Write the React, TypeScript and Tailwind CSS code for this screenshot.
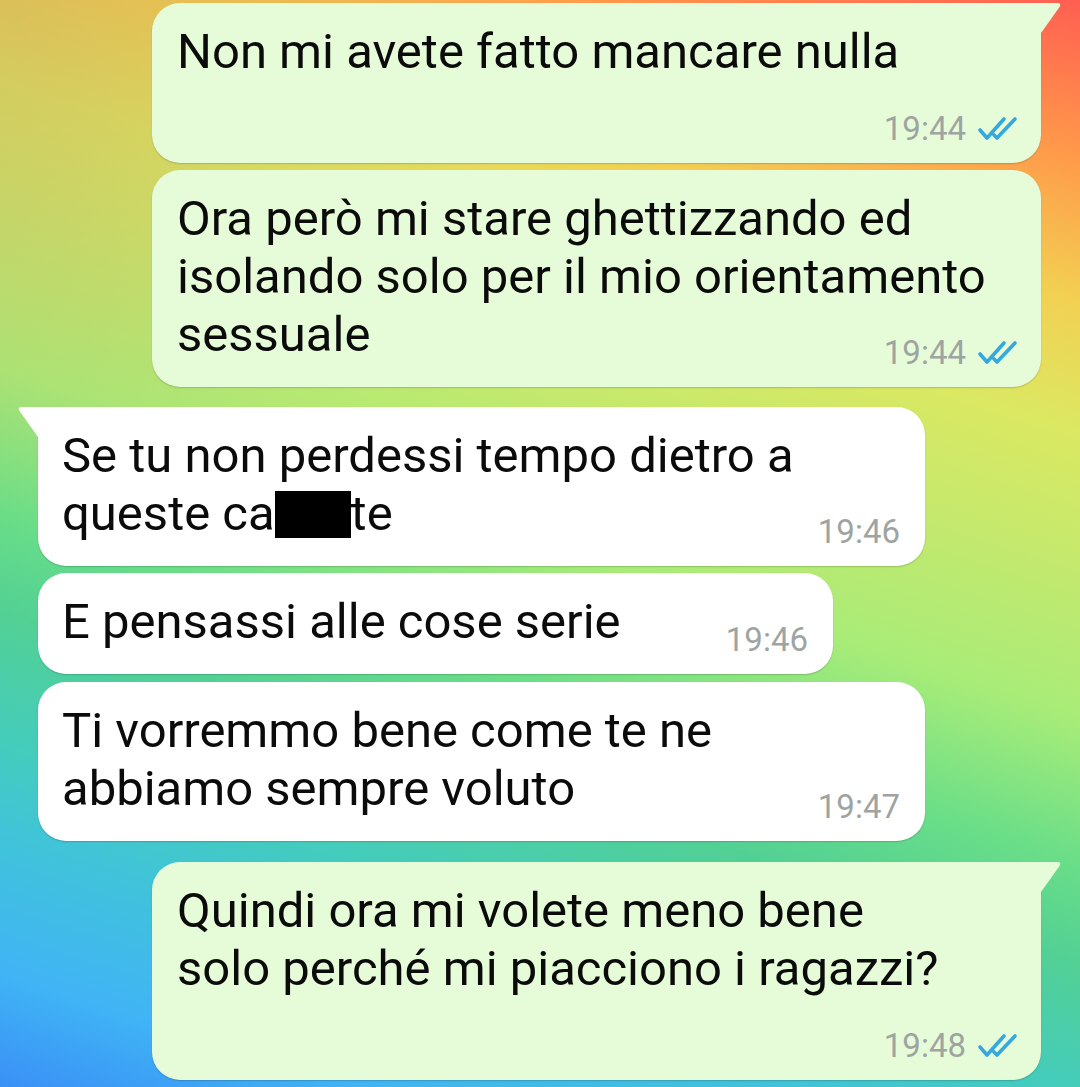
import React from "react";

type Msg = {
  out: boolean;
  lines: React.ReactNode[];
  time: string;
  inline: boolean;
  tail?: boolean;
  width: string;
  gap: string;
};

const messages: Msg[] = [
  {
    out: true,
    lines: ["Non mi avete fatto mancare nulla"],
    time: "19:44",
    inline: false,
    tail: true,
    width: "w-[889px]",
    gap: "mt-[3px]",
  },
  {
    out: true,
    lines: [
      "Ora però mi stare ghettizzando ed",
      "isolando solo per il mio orientamento",
      "sessuale",
    ],
    time: "19:44",
    inline: true,
    width: "w-[889px]",
    gap: "mt-[7px]",
  },
  {
    out: false,
    lines: [
      "Se tu non perdessi tempo dietro a",
      <>
        queste ca
        <span className="inline-block w-[76px] h-[47px] bg-black align-[-8px]" />
        te
      </>,
    ],
    time: "19:46",
    inline: true,
    tail: true,
    width: "w-[887px]",
    gap: "mt-[20px]",
  },
  {
    out: false,
    lines: ["E pensassi alle cose serie"],
    time: "19:46",
    inline: true,
    width: "w-[795px]",
    gap: "mt-[7px]",
  },
  {
    out: false,
    lines: ["Ti vorremmo bene come te ne", "abbiamo sempre voluto"],
    time: "19:47",
    inline: true,
    width: "w-[887px]",
    gap: "mt-[8px]",
  },
  {
    out: true,
    lines: ["Quindi ora mi volete meno bene", "solo perché mi piacciono i ragazzi?"],
    time: "19:48",
    inline: false,
    tail: true,
    width: "w-[889px]",
    gap: "mt-[21px]",
  },
];

const DoubleCheck = () => (
  <svg width="42" height="26" viewBox="0 0 42 26" fill="none" className="shrink-0">
    <path
      d="M3 14 L10 22 L27 3 M17 19 L20 22 L38 3"
      stroke="#34a8df"
      strokeWidth="3.6"
      strokeLinecap="round"
      strokeLinejoin="round"
    />
  </svg>
);

const Bubble = ({ m }: { m: Msg }) => {
  const corners = m.tail
    ? m.out
      ? "rounded-[28px] rounded-tr-none"
      : "rounded-[28px] rounded-tl-none"
    : "rounded-[28px]";
  return (
    <div
      className={`relative ${m.width} ${m.gap} ${m.out ? "ml-[152px] bg-[#e6fcd9] pl-[25px] pr-[22px]" : "ml-[38px] bg-white pl-[24px] pr-[25px]"} ${corners} pt-[20px] pb-[17px] shadow-[0_1px_1.5px_rgba(0,0,0,0.18)]`}
    >
      {m.tail && m.out && (
        <svg
          width="22"
          height="32"
          viewBox="0 0 22 32"
          className="absolute left-full top-0"
        >
          <path d="M0 0 H16 Q21 0 18.5 4 L0 30 Z" fill="#e6fcd9" />
        </svg>
      )}
      {m.tail && !m.out && (
        <svg
          width="22"
          height="32"
          viewBox="0 0 22 32"
          className="absolute right-full top-0"
        >
          <path d="M22 0 H6 Q1 0 3.5 4 L22 30 Z" fill="#ffffff" />
        </svg>
      )}
      <div className="text-[49px] leading-[58px] text-[#0b0b0b]">
        {m.lines.map((l, i) => (
          <div key={i} className="whitespace-nowrap">
            {l}
          </div>
        ))}
      </div>
      <div
        className={`flex justify-end items-center gap-[11px] h-[34px] ${m.inline ? "mt-[-28px]" : "mt-[31px]"}`}
      >
        <span className="text-[33px] leading-[34px] text-[#9ea4a1]">{m.time}</span>
        {m.out && <DoubleCheck />}
      </div>
    </div>
  );
};

export default function App() {
  return (
    <div
      className="w-[1080px] h-[1087px] overflow-hidden flex flex-col font-['Roboto',sans-serif] bg-[radial-gradient(ellipse_at_0%_0%,rgba(200,160,90,0.45)_0%,rgba(200,160,90,0)_35%),linear-gradient(198deg,#ff5e52_0%,#ff9a4a_11%,#f2d052_21%,#dbe862_30%,#bde970_42%,#a8ec78_50%,#6ade88_60%,#52d094_67%,#44ccbc_76%,#40c4d8_82%,#40b4f5_92%,#3a90f5_100%)]"
    >
      {messages.map((m, i) => (
        <Bubble key={i} m={m} />
      ))}
    </div>
  );
}
